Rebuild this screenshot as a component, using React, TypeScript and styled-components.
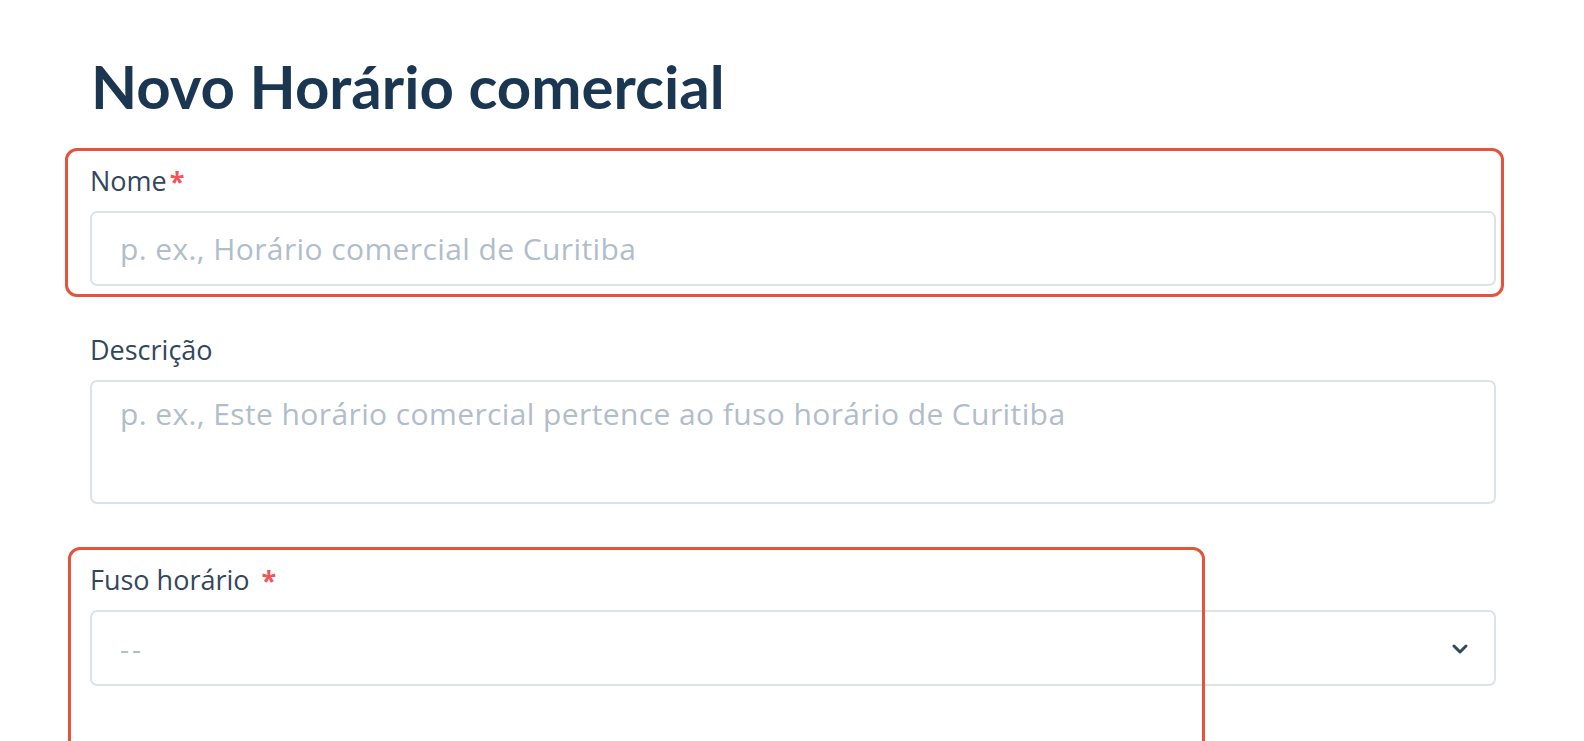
import React from "react";
import styled, { createGlobalStyle } from "styled-components";

const GlobalStyle = createGlobalStyle`
  html, body { margin: 0; padding: 0; background: #ffffff; }
  body { font-family: "Open Sans", "Noto Sans", sans-serif; overflow: hidden; }
  * { box-sizing: border-box; }
`;

const Page = styled.main`
  width: 1584px;
  height: 741px;
  padding: 50px 0 0 90px;
  overflow: hidden;
`;

const Title = styled.h1`
  margin: 0 0 41px 1px;
  font-family: "Lato", "Noto Sans", sans-serif;
  font-weight: 700;
  font-size: 60px;
  line-height: 72px;
  color: #1b3651;
`;

const Form = styled.form`
  width: 1406px;
  display: flex;
  flex-direction: column;
`;

const Field = styled.div<{ $gapAfter: number }>`
  position: relative;
  display: flex;
  flex-direction: column;
  margin-bottom: ${(p) => p.$gapAfter}px;
`;

const Label = styled.label`
  display: flex;
  align-items: baseline;
  margin: 0 0 12px 0;
  font-family: "Open Sans", "Noto Sans", sans-serif;
  font-size: 27px;
  line-height: 36px;
  font-weight: 500;
  color: #33475b;
`;

const Required = styled.span<{ $spaced?: boolean }>`
  color: #f2545b;
  font-size: 27px;
  font-weight: 700;
  margin-left: ${(p) => (p.$spaced ? "12px" : "3px")};
`;

const baseControl = `
  width: 100%;
  border: 2px solid #dbe2ea;
  border-radius: 7px;
  background: #ffffff;
  font-family: "Open Sans", "Noto Sans", sans-serif;
  font-size: 30px;
  letter-spacing: 0.4px;
  color: #33475b;
  outline: none;
`;

const TextInput = styled.input`
  ${baseControl}
  height: 75px;
  padding: 0 28px;
  &::placeholder { color: #b1bdca; }
`;

const TextArea = styled.textarea`
  ${baseControl}
  height: 124px;
  padding: 14px 28px;
  resize: none;
  line-height: 36px;
  &::placeholder { color: #b1bdca; }
`;

const Select = styled.div`
  ${baseControl}
  height: 76px;
  padding: 0 26px 0 28px;
  display: flex;
  align-items: center;
  justify-content: space-between;
`;

const SelectValue = styled.span`
  color: #b1bdca;
  font-size: 28px;
  letter-spacing: 3px;
`;

const Chevron = styled.svg`
  width: 16px;
  height: 10px;
  margin-top: 2px;
`;

const Annotation = styled.div<{ $left: number; $top: number; $width: number; $height: number }>`
  position: absolute;
  left: ${(p) => p.$left}px;
  top: ${(p) => p.$top}px;
  width: ${(p) => p.$width}px;
  height: ${(p) => p.$height}px;
  border: 3.5px solid #e5533d;
  border-radius: 12px;
  pointer-events: none;
`;

export default function App() {
  return (
    <>
      <GlobalStyle />
      <Page>
        <Title>Novo Horário comercial</Title>
        <Form onSubmit={(e) => e.preventDefault()}>
          <Field $gapAfter={46}>
            <Label>
              Nome<Required>*</Required>
            </Label>
            <TextInput placeholder="p. ex., Horário comercial de Curitiba" />
            <Annotation $left={-25} $top={-15} $width={1439} $height={149} />
          </Field>
          <Field $gapAfter={58}>
            <Label>Descrição</Label>
            <TextArea placeholder="p. ex., Este horário comercial pertence ao fuso horário de Curitiba" />
          </Field>
          <Field $gapAfter={0}>
            <Label>
              Fuso horário<Required $spaced>*</Required>
            </Label>
            <Select>
              <SelectValue>--</SelectValue>
              <Chevron viewBox="0 0 16 10">
                <path d="M2 2 L8 8 L14 2" fill="none" stroke="#33475b" strokeWidth="3" strokeLinecap="round" strokeLinejoin="round" />
              </Chevron>
            </Select>
            <Annotation $left={-22} $top={-15} $width={1137} $height={220} />
          </Field>
        </Form>
      </Page>
    </>
  );
}
